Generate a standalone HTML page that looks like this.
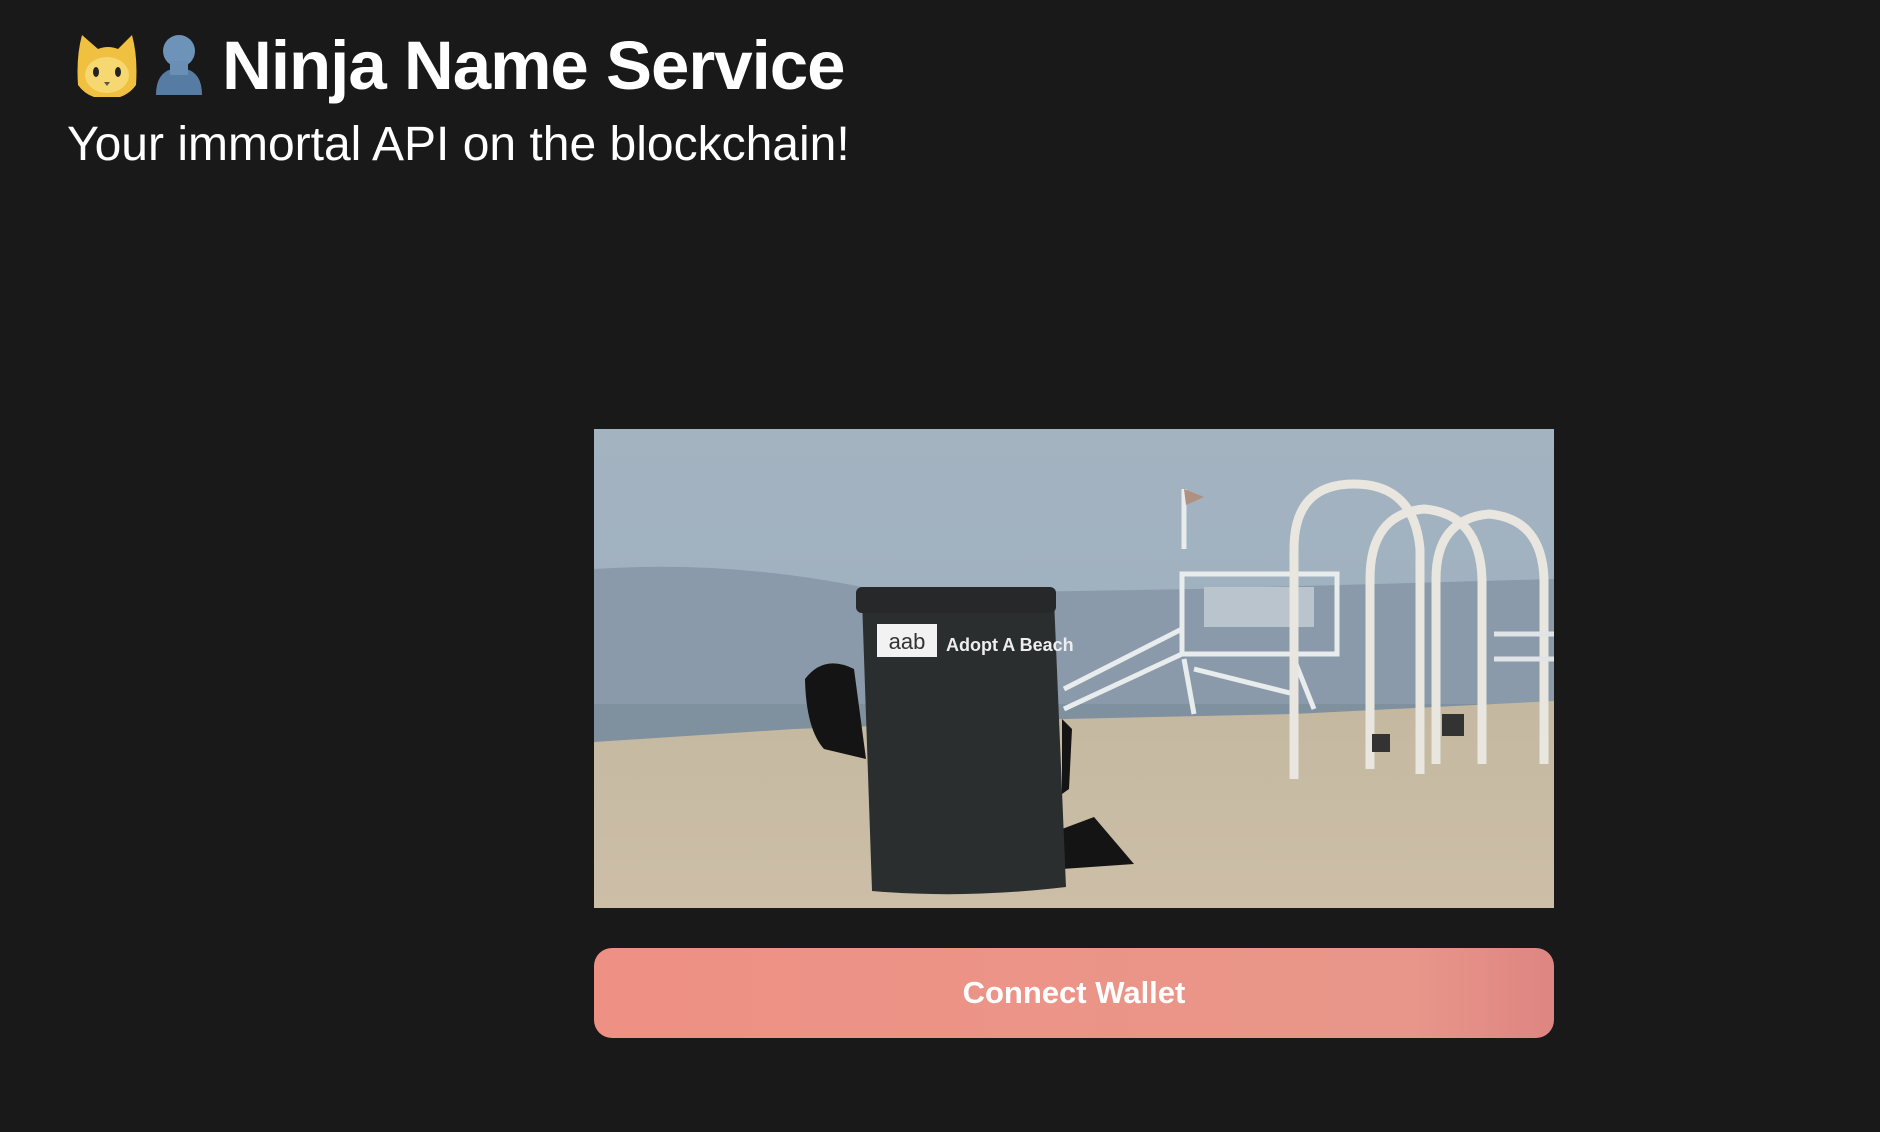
<!DOCTYPE html>
<html><head><meta charset="utf-8"><style>
html,body{margin:0;padding:0;background:#191919;width:1880px;height:1132px;overflow:hidden}
body{font-family:"Liberation Sans",sans-serif;color:#fff;position:relative}
.t{position:absolute;left:72px;top:26px;font-size:69px;font-weight:bold;white-space:nowrap;letter-spacing:-1px}
.s{position:absolute;left:67px;top:117px;font-size:48px;white-space:nowrap;letter-spacing:0px}
.img{position:absolute;left:594px;top:429px;width:960px;height:479px}
.btn{position:absolute;left:594px;top:948px;width:960px;height:90px;border-radius:18px;background:linear-gradient(90deg,#ef9084 0%,#ea9588 60%,#e8968a 85%,#de8582 100%);display:flex;align-items:center;justify-content:center;font-size:31px;font-weight:bold}
</style></head><body>
<div class="t"><svg width="140" height="70" viewBox="0 0 140 70" style="vertical-align:-8px;margin-right:10px">
<path d="M6 58 Q4 30 10 8 L26 22 Q36 18 46 22 L60 8 Q66 30 64 58 Q54 72 35 72 Q16 72 6 58Z" fill="#f0c040"/>
<ellipse cx="35" cy="48" rx="22" ry="18" fill="#f7d770"/>
<ellipse cx="24" cy="45" rx="3" ry="5" fill="#222"/><ellipse cx="46" cy="45" rx="3" ry="5" fill="#222"/>
<path d="M32 55 L38 55 L35 59Z" fill="#555"/>
<circle cx="107" cy="24" r="16" fill="#6e93b8"/>
<path d="M84 68 Q84 46 100 42 L114 42 Q130 46 130 68Z" fill="#577ca3"/>
<rect x="98" y="34" width="18" height="14" fill="#6a8fb5"/>
</svg>Ninja Name Service</div>
<div class="s">Your immortal API on the blockchain!</div>
<svg class="img" viewBox="0 0 960 479" preserveAspectRatio="none">
<defs>
<linearGradient id="sky" x1="0" y1="0" x2="0" y2="1"><stop offset="0" stop-color="#a3b3c0"/><stop offset="0.5" stop-color="#9fb0bf"/><stop offset="1" stop-color="#8fa0b0"/></linearGradient>
<linearGradient id="sand" x1="0" y1="0" x2="0" y2="1"><stop offset="0" stop-color="#c4b8a0"/><stop offset="1" stop-color="#cdbfa7"/></linearGradient>
</defs>
<rect width="960" height="479" fill="url(#sky)"/>
<path d="M0 140 Q150 130 300 165 L600 160 L960 150 L960 300 L0 310Z" fill="#8a9aab"/>
<rect x="0" y="275" width="960" height="40" fill="#7f909f"/>
<path d="M0 313 L200 300 L470 290 L700 285 L960 272 L960 479 L0 479Z" fill="url(#sand)"/>
<g fill="none" stroke="#e8ecec" stroke-width="5">
<path d="M470 260 L588 200 L588 185"/><path d="M470 280 L588 225"/>
<rect x="588" y="145" width="155" height="80"/>
<path d="M590 230 L600 285 M700 230 L720 280 M600 240 L700 265"/>
<path d="M590 120 L590 60"/>
</g>
<rect x="610" y="158" width="110" height="40" fill="#b9c4cc"/>
<path d="M590 60 L610 68 L592 76Z" fill="#b09080"/>
<g fill="none" stroke="#e8e6df" stroke-width="9">
<path d="M700 350 L700 120 Q700 55 760 55 Q820 55 826 120 L826 345"/>
<path d="M776 340 L776 150 Q776 85 830 80 Q886 85 888 150 L888 335"/>
<path d="M842 335 L842 150 Q842 90 895 85 Q948 90 950 150 L950 335"/>
</g>
<path d="M900 230 L960 230 M900 205 L960 205" stroke="#e0e4e6" stroke-width="5"/>
<rect x="778" y="305" width="18" height="18" fill="#333"/><rect x="848" y="285" width="22" height="22" fill="#333"/>
<path d="M211 250 Q230 225 260 240 L272 330 L230 320 Q212 300 211 250Z" fill="#141414"/>
<path d="M468 400 L500 388 L540 435 L468 440Z" fill="#141414"/>
<path d="M468 290 L478 300 L475 360 L468 365Z" fill="#141414"/>
<path d="M268 170 L460 170 L472 458 Q370 470 278 462Z" fill="#2b2e2f"/>
<rect x="262" y="158" width="200" height="26" rx="6" fill="#262829"/>
<rect x="283" y="195" width="60" height="33" fill="#f2f2f2"/>
<text x="313" y="220" font-size="22" font-family="Liberation Sans" fill="#333" text-anchor="middle">aab</text>
<text x="352" y="222" font-size="18" font-weight="bold" font-family="Liberation Sans" fill="#eee">Adopt A Beach</text>
</svg>
<div class="btn">Connect Wallet</div>
</body></html>
